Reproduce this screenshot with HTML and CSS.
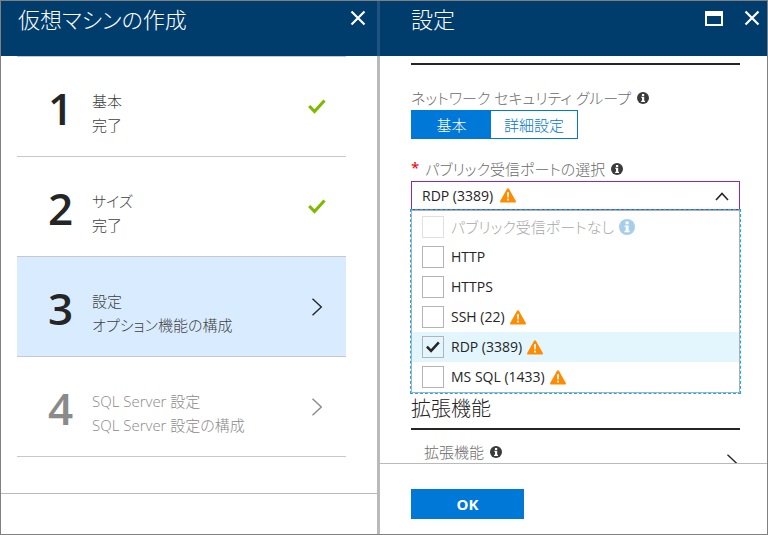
FILE: index.html
```html
<!DOCTYPE html>
<html lang="ja">
<head>
<meta charset="utf-8">
<meta name="viewport" content="width=device-width, initial-scale=1">
<title>仮想マシンの作成</title>
<link rel="stylesheet" href="styles.css">
</head>
<body>
<svg class="defs" aria-hidden="true">
  <symbol id="close" viewBox="0 0 16 16"><path d="M1.5 1.5l13 13M14.5 1.5l-13 13" fill="none" stroke="currentColor" stroke-width="2.2"/></symbol>
  <symbol id="info" viewBox="0 0 16 16"><circle cx="8" cy="8" r="8" fill="currentColor"/><path d="M6.6 2.6h3v2.6h-3zM5.6 6.4h4v5.4h1.1v1.4H5.5v-1.4h1.2V7.8H5.6z" fill="#fff"/></symbol>
  <symbol id="warn" viewBox="0 0 16 15"><path d="M8 .3q.7 0 1.1.7l6.7 12q.5 1.6-1 1.6H1.2q-1.5 0-1-1.6L6.9 1Q7.300 .3 8 .3z" fill="#ff8c00"/><path d="M7 4.300h2l-.3 5.200H7.300zM7.100 10.700h1.800v1.800H7.100z" fill="#fff"/></symbol>
  <symbol id="tick" viewBox="0 0 18 15"><path d="M1.200 7l5.300 5.500L16.500 1.500" fill="none" stroke="currentColor" stroke-width="3.200"/></symbol>
  <symbol id="next" viewBox="0 0 12 18"><path d="M1.500 .7L10.300 9l-8.800 8.300" fill="none" stroke="currentColor" stroke-width="1.400"/></symbol>
</svg>
<div class="shell">
  <section class="blade blade-create">
    <header class="blade-head">
      <h1>仮想マシンの作成</h1>
      <button class="icon-button" type="button" aria-label="閉じる"><svg class="i16"><use href="#close"/></svg></button>
    </header>
    <ol class="steps">
      <li><a class="step" href="#basics"><span class="number">1</span><span class="text"><span class="name">基本</span><span class="status">完了</span></span><svg class="done"><use href="#tick"/></svg></a></li>
      <li><a class="step" href="#size"><span class="number">2</span><span class="text"><span class="name">サイズ</span><span class="status">完了</span></span><svg class="done"><use href="#tick"/></svg></a></li>
      <li><a class="step current" href="#settings"><span class="number">3</span><span class="text"><span class="name">設定</span><span class="status">オプション機能の構成</span></span><svg class="chevron"><use href="#next"/></svg></a></li>
      <li><a class="step pending" href="#sql"><span class="number">4</span><span class="text"><span class="name">SQL Server 設定</span><span class="status">SQL Server 設定の構成</span></span><svg class="chevron"><use href="#next"/></svg></a></li>
    </ol>
    <footer class="blade-foot foot-empty"></footer>
  </section>

  <section class="blade blade-settings" id="settings">
    <header class="blade-head">
      <h1>設定</h1>
      <button class="icon-button" type="button" aria-label="最大化"><svg class="window" viewBox="0 0 18 15"><path d="M0 0h18v15H0zM2 5v8h14V5z" fill="currentColor" fill-rule="evenodd"/></svg></button>
      <button class="icon-button" type="button" aria-label="閉じる"><svg class="i16"><use href="#close"/></svg></button>
    </header>
    <form class="blade-body">
      <hr class="rule">
      <div class="label" id="nsg-label">ネットワーク セキュリティ グループ <svg class="info"><use href="#info"/></svg></div>
      <div class="toggle" role="group" aria-labelledby="nsg-label">
        <button class="toggle-on" type="button" aria-pressed="true">基本</button>
        <button type="button" aria-pressed="false">詳細設定</button>
      </div>
      <label class="label label-ports" for="ports"><span class="required">*</span>パブリック受信ポートの選択 <svg class="info"><use href="#info"/></svg></label>
      <div class="combo">
        <select id="ports"><option>RDP (3389)</option></select>
        <svg class="warn combo-warn"><use href="#warn"/></svg>
        <svg class="combo-arrow" viewBox="0 0 14 9"><path d="M1 8l6-6.500L13 8" fill="none" stroke="currentColor" stroke-width="1.600"/></svg>
      </div>
      <div class="options" role="group" aria-label="受信ポート">
        <label class="option disabled"><span class="box"><input type="checkbox" disabled></span>パブリック受信ポートなし<svg class="i16 info-blue"><use href="#info"/></svg></label>
        <label class="option"><span class="box"><input type="checkbox"></span>HTTP</label>
        <label class="option"><span class="box"><input type="checkbox"></span>HTTPS</label>
        <label class="option"><span class="box"><input type="checkbox"></span>SSH (22)<svg class="warn"><use href="#warn"/></svg></label>
        <label class="option selected"><span class="box"><input type="checkbox" checked><svg class="tick"><use href="#tick"/></svg></span>RDP (3389)<svg class="warn"><use href="#warn"/></svg></label>
        <label class="option"><span class="box"><input type="checkbox"></span>MS SQL (1433)<svg class="warn"><use href="#warn"/></svg></label>
      </div>
      <h2>拡張機能</h2>
      <a class="extension" href="#extensions"><span>拡張機能 <svg class="info"><use href="#info"/></svg></span><svg class="chevron"><use href="#next"/></svg></a>
    </form>
    <footer class="blade-foot"><button class="ok" type="button">OK</button></footer>
  </section>
</div>
</body>
</html>
```
FILE: styles.css
```css
* { box-sizing: border-box; }

body {
  margin: 0;
  color: #252525;
  background: #fff;
  font: 14px/24px "Open Sans", "Noto Sans CJK JP", sans-serif;
  font-feature-settings: "palt";
}

button, select, input { margin: 0; font: inherit; color: inherit; font-feature-settings: inherit; }
a { color: inherit; text-decoration: none; }
svg { display: block; flex: none; }
.defs { position: absolute; width: 0; height: 0; }

.shell {
  display: grid;
  grid-template-columns: 379fr 387fr;
  height: 100vh;
  border: 1px solid #808080;
}

.blade { display: flex; flex-direction: column; min-width: 0; min-height: 0; }
.blade-create { border-right: 3px solid #bababa; }
.blade-create .blade-head { margin-right: -3px; padding-right: 11px; border-right: 3px solid #1f5380; }

.blade-head {
  display: flex;
  align-items: flex-start;
  gap: 21px;
  flex: none;
  height: 55px;
  padding: 2px 7px 0 31px;
  color: #fff;
  background: #003d6d;
}
.blade-create .blade-head { padding-left: 17px; }

h1 { flex: 1; margin: 0; font-size: 22px; font-weight: 300; line-height: 32px; }

.icon-button {
  display: flex;
  align-items: center;
  height: 30px;
  padding: 0;
  border: 0;
  background: none;
}
.i16 { width: 16px; height: 16px; }
.window { width: 18px; height: 15px; }

.steps { flex: 1; min-height: 0; margin: 0; padding: 0 31px 0 16px; list-style: none; overflow: hidden; }
.steps li { border-bottom: 1px solid #c8c8c8; }
.steps li:first-child { border-top: 1px solid #c8c8c8; }

.step { display: flex; align-items: center; height: 99px; padding: 0 20px 0 31px; }
.number { width: 44px; padding-top: 2px; font-size: 44px; font-weight: 600; line-height: 48px; }
.text { display: flex; flex: 1; flex-direction: column; padding-top: 12px; color: #404040; font-size: 15px; font-weight: 300; }
.current { background: #d9ecff; }
.pending, .pending .text { color: #8a8a8a; }
.done { width: 18px; height: 15px; color: #7fba00; }
.chevron { width: 12px; height: 18px; }
.step .chevron { margin-right: 3px; }

.blade-foot { flex: none; padding: 25px 31px 15px; border-top: 1px solid #bababa; }
.foot-empty { height: 41px; padding: 0; }

.blade-body { flex: 1; min-height: 0; padding: 7px 27px 0 31px; overflow: hidden; }
.rule { margin: 0; border: 0; border-top: 2px solid #252525; }

.label { display: flex; align-items: center; gap: 6px; margin-top: 21px; color: #6b6b6b; font-size: 15px; font-weight: 300; }
.info { width: 12px; height: 12px; color: #3b3b3b; }

.toggle { display: flex; width: max-content; border: 1px solid #0078d7; }
.toggle button { width: 86px; height: 27px; padding: 0; border: 0; color: #0078d7; background: #fff; font-size: 15px; line-height: 26px; font-weight: 300; }
.toggle .toggle-on { width: 79px; color: #fff; background: #0078d7; }

.label-ports { margin-top: 18px; }
.required { align-self: flex-start; color: #e81123; font-size: 15px; font-weight: 600; line-height: 20px; }

.combo { position: relative; border: 1px solid #8c2aa8; }
.combo select {
  display: block;
  width: 100%;
  height: 27px;
  padding: 0 10px;
  border: 0;
  border-radius: 0;
  outline: 0;
  color: #252525;
  background: #fff;
  appearance: none;
}
.warn { width: 16px; height: 15px; }
.combo-warn { position: absolute; top: 6px; left: 88px; }
.combo-arrow { position: absolute; top: 10px; right: 10px; width: 14px; height: 9px; }

.options { position: relative; padding-top: 1px; border: 1px solid #b0b0b0; outline: 1px dashed #00b4f0; }
.option { display: flex; align-items: center; gap: 5px; height: 30px; padding-left: 10px; }
.box { display: grid; margin-right: 2px; }
.box > * { grid-area: 1 / 1; place-self: center; }
.box input { width: 22px; height: 22px; border: 1px solid #b4b4b4; background: #fff; appearance: none; }
.selected, .selected .box input { background: #e3f6fd; }
.tick { position: relative; width: 14px; height: 12px; }
.disabled { color: #a8a8a8; font-size: 15px; font-weight: 300; }
.disabled .box input { border-color: #e0e0e0; }
.info-blue { color: #a6cdeb; }

h2 { margin: 0; padding-bottom: 3px; border-bottom: 2px solid #252525; font-size: 20px; font-weight: 300; line-height: 32px; }

.extension { display: flex; justify-content: space-between; align-items: flex-start; padding: 10px 2px 0 13px; }
.extension span { display: flex; align-items: center; gap: 6px; color: #6b6b6b; font-size: 15px; font-weight: 300; }
.extension .chevron { margin-top: 14px; }

.ok { display: block; width: 113px; height: 30px; padding: 0; border: 0; color: #fff; background: #0078d7; font-size: 15px; font-weight: 700; }
```
